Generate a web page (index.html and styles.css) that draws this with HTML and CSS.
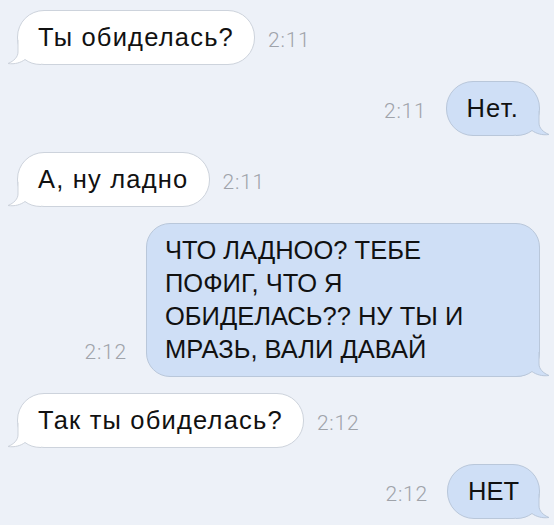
FILE: index.html
```html
<!DOCTYPE html>
<html lang="ru">
<head>
<meta charset="utf-8">
<link rel="stylesheet" href="styles.css">
</head>
<body>
<div class="chat">
  <div class="row in">
    <div class="bubble lc"><svg class="tail" viewBox="0 0 34 26" width="34" height="26"><path class="tf" d="M11,0 L11,12 C11,17 7,21 1,23.5 C8,24.5 14,22.5 18,19.5 C22,22.5 27,24.5 34,24.5 L34,0 Z"/><path class="ts" d="M11,0 L11,12 C11,17 7,21 1,23.5 C8,24.5 14,22.5 18,19.5 C22,22.5 27,24.5 34,24.5"/></svg><span class="txt">Ты обиделась?</span></div>
    <div class="time">2:11</div>
  </div>
  <div class="row out">
    <div class="time">2:11</div>
    <div class="bubble lc"><svg class="tail" viewBox="0 0 34 26" width="34" height="26"><path class="tf" d="M11,0 L11,12 C11,17 7,21 1,23.5 C8,24.5 14,22.5 18,19.5 C22,22.5 27,24.5 34,24.5 L34,0 Z"/><path class="ts" d="M11,0 L11,12 C11,17 7,21 1,23.5 C8,24.5 14,22.5 18,19.5 C22,22.5 27,24.5 34,24.5"/></svg><span class="txt">Нет.</span></div>
  </div>
  <div class="row in">
    <div class="bubble lc"><svg class="tail" viewBox="0 0 34 26" width="34" height="26"><path class="tf" d="M11,0 L11,12 C11,17 7,21 1,23.5 C8,24.5 14,22.5 18,19.5 C22,22.5 27,24.5 34,24.5 L34,0 Z"/><path class="ts" d="M11,0 L11,12 C11,17 7,21 1,23.5 C8,24.5 14,22.5 18,19.5 C22,22.5 27,24.5 34,24.5"/></svg><span class="txt">А, ну ладно</span></div>
    <div class="time">2:11</div>
  </div>
  <div class="row out">
    <div class="time">2:12</div>
    <div class="bubble wide"><svg class="tail" viewBox="0 0 34 26" width="34" height="26"><path class="tf" d="M11,0 L11,12 C11,17 7,21 1,23.5 C8,24.5 14,22.5 18,19.5 C22,22.5 27,24.5 34,24.5 L34,0 Z"/><path class="ts" d="M11,0 L11,12 C11,17 7,21 1,23.5 C8,24.5 14,22.5 18,19.5 C22,22.5 27,24.5 34,24.5"/></svg><span class="txt">ЧТО ЛАДНОО? ТЕБЕ<br>ПОФИГ, ЧТО Я<br>ОБИДЕЛАСЬ?? НУ ТЫ И<br>МРАЗЬ, ВАЛИ ДАВАЙ</span></div>
  </div>
  <div class="row in">
    <div class="bubble lc"><svg class="tail" viewBox="0 0 34 26" width="34" height="26"><path class="tf" d="M11,0 L11,12 C11,17 7,21 1,23.5 C8,24.5 14,22.5 18,19.5 C22,22.5 27,24.5 34,24.5 L34,0 Z"/><path class="ts" d="M11,0 L11,12 C11,17 7,21 1,23.5 C8,24.5 14,22.5 18,19.5 C22,22.5 27,24.5 34,24.5"/></svg><span class="txt">Так ты обиделась?</span></div>
    <div class="time">2:12</div>
  </div>
  <div class="row out">
    <div class="time">2:12</div>
    <div class="bubble"><svg class="tail" viewBox="0 0 34 26" width="34" height="26"><path class="tf" d="M11,0 L11,12 C11,17 7,21 1,23.5 C8,24.5 14,22.5 18,19.5 C22,22.5 27,24.5 34,24.5 L34,0 Z"/><path class="ts" d="M11,0 L11,12 C11,17 7,21 1,23.5 C8,24.5 14,22.5 18,19.5 C22,22.5 27,24.5 34,24.5"/></svg><span class="txt">НЕТ</span></div>
  </div>
</div>
</body>
</html>
```
FILE: styles.css
```css
html, body {
  margin: 0;
  padding: 0;
  background: #edf1f8;
}
.chat {
  display: flex;
  flex-direction: column;
  gap: 16px;
  padding: 10px 14px 0 17px;
}
.row {
  display: flex;
  align-items: flex-end;
}
.row.in {
  justify-content: flex-start;
  gap: 13px;
}
.row.out {
  justify-content: flex-end;
  gap: 19px;
}
.bubble {
  position: relative;
  font-family: "Liberation Sans", Arial, sans-serif;
  font-size: 25.5px;
  line-height: 33px;
  color: #111;
  padding: 10px 20px;
  border-radius: 27px;
  border: 1px solid #cdd3dc;
  background: #ffffff;
}
.bubble.lc {
  letter-spacing: 1.2px;
}
.txt {
  position: relative;
  z-index: 1;
}
.out .bubble {
  background: #cfdff6;
  border-color: #b9c7da;
}
.bubble.wide {
  width: 356px;
  padding: 10px 18px;
  border-radius: 24px;
}
.tail {
  position: absolute;
  left: -11px;
  bottom: -2px;
  overflow: visible;
  z-index: 0;
}
.out .tail {
  left: auto;
  right: -11px;
  transform: scaleX(-1);
}
.tf {
  fill: #ffffff;
}
.ts {
  fill: none;
  stroke: #cdd3dc;
  stroke-width: 1;
}
.out .tf {
  fill: #cfdff6;
}
.out .ts {
  stroke: #b9c7da;
}
.time {
  font-family: Roboto, "Liberation Sans", sans-serif;
  font-weight: 300;
  font-size: 21px;
  letter-spacing: 0.8px;
  line-height: 24px;
  color: #9fa3aa;
  padding-bottom: 13px;
}
```
